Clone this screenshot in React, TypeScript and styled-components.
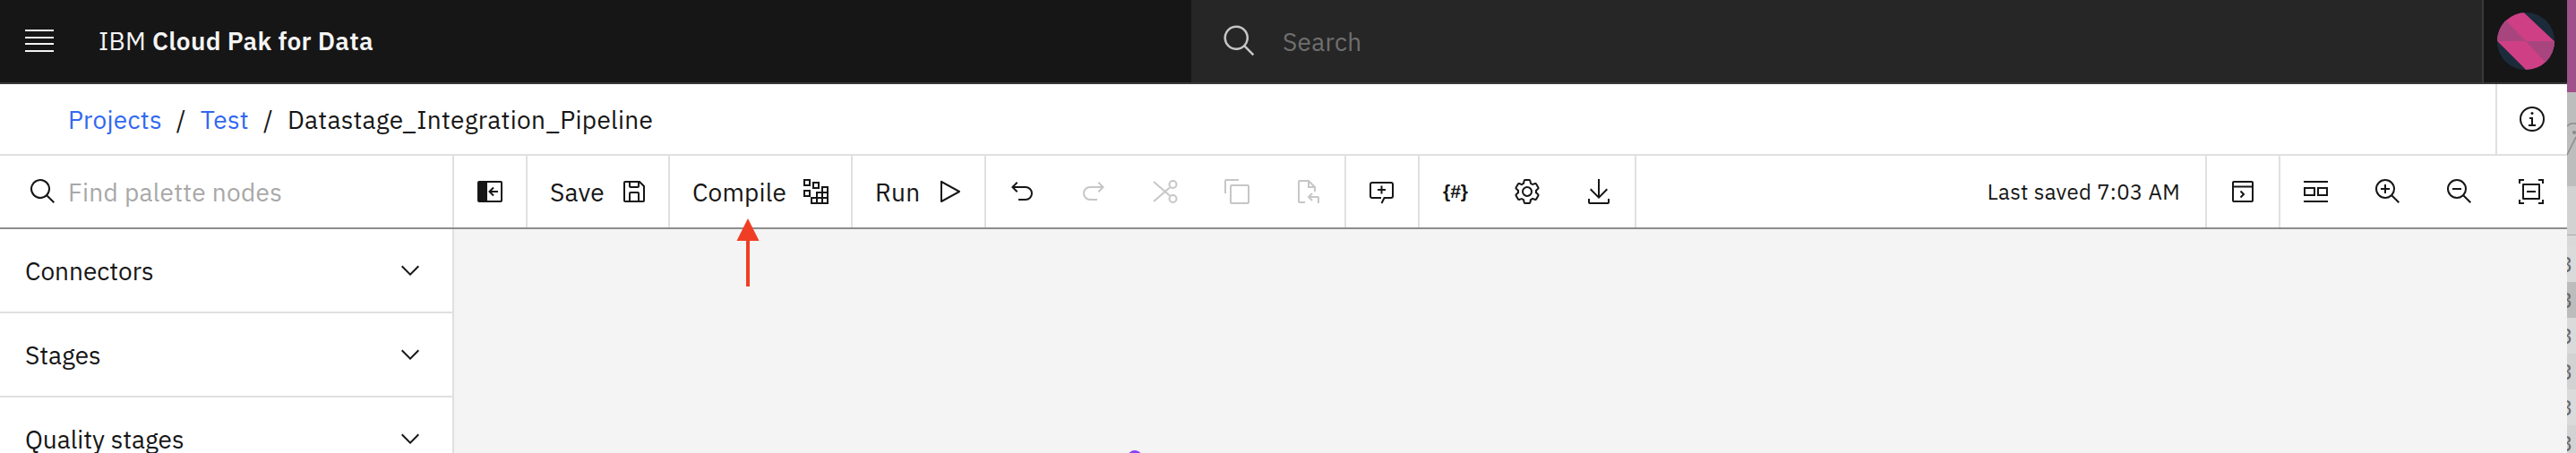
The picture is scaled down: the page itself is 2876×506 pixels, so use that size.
import React from "react";
import styled, { createGlobalStyle } from "styled-components";

const font = `"IBM Plex Sans", Roboto, "Liberation Sans", sans-serif`;

const GlobalStyle = createGlobalStyle`
    html, body {
        margin: 0;
        padding: 0;
        background: #ffffff;
        font-family: ${font};
        overflow: hidden;
    }
`;

interface IconProps {
    faded?: boolean
    children: React.ReactNode
}

const Icon = (props: IconProps) => (
    <IconSvg viewBox="0 0 32 32" $faded={props.faded}>{props.children}</IconSvg>
);

const MAGNIFIER = "M21.4479,20A10.856,10.856,0,0,0,24,13,11,11,0,1,0,13,24a10.856,10.856,0,0,0,7-2.5521L27.5859,29,29,27.5859ZM13,22a9,9,0,1,1,9-9A9.01,9.01,0,0,1,13,22Z";
const SEARCH = "M29,27.5859l-7.5521-7.5521a11.0177,11.0177,0,1,0-1.4141,1.4141L27.5859,29ZM4,13a9,9,0,1,1,9,9A9.01,9.01,0,0,1,4,13Z";

const App = () => {
    return (
        <>
        <GlobalStyle />
        <Page>
            <Main>
                <Header>
                    <MenuButton>
                        <MenuBar /><MenuBar /><MenuBar /><MenuBar />
                    </MenuButton>
                    <Brand>IBM <b>Cloud Pak for Data</b></Brand>
                    <HeaderSearch>
                        <HeaderSearchIcon viewBox="0 0 32 32">
                            <path d={SEARCH} />
                        </HeaderSearchIcon>
                        <HeaderSearchText>Search</HeaderSearchText>
                    </HeaderSearch>
                    <AvatarCell>
                        <svg width="64" height="64" viewBox="0 0 64 64">
                            <defs>
                                <clipPath id="avatar"><circle cx="32" cy="32" r="32" /></clipPath>
                            </defs>
                            <g clipPath="url(#avatar)">
                                <rect width="64" height="64" fill="#1c2b3a" />
                                <polygon points="30,0 64,32 0,32 0,0" fill="#cf3f85" />
                                <polygon points="0,32 64,32 64,64 32,64" fill="#cf3f85" />
                                <polygon points="0,32 32,32 10,9 0,14" fill="#a8457f" />
                                <polygon points="32,32 64,32 64,50 54,56" fill="#a8457f" />
                                <polygon points="0,32 32,64 0,64" fill="#1c2b3a" />
                                <polygon points="30,0 64,0 64,32" fill="#1c2b3a" />
                            </g>
                        </svg>
                    </AvatarCell>
                </Header>

                <Breadcrumbs>
                    <Crumb href="#">Projects</Crumb>
                    <Slash>/</Slash>
                    <Crumb href="#">Test</Crumb>
                    <Slash>/</Slash>
                    <span>Datastage_Integration_Pipeline</span>
                    <InfoCell>
                        <Icon>
                            <path d="M17 22v-8h-4v2h2v6h-3v2h8v-2h-3z" />
                            <path d="M16 8a1.5 1.5 0 1 0 1.5 1.5A1.5 1.5 0 0 0 16 8z" />
                            <path d="M16 30a14 14 0 1 1 14-14 14 14 0 0 1-14 14zm0-26a12 12 0 1 0 12 12A12 12 0 0 0 16 4z" />
                        </Icon>
                    </InfoCell>
                </Breadcrumbs>

                <ToolRow>
                    <PaletteSearch>
                        <PaletteSearchIcon viewBox="0 0 32 32">
                            <path d={SEARCH} />
                        </PaletteSearchIcon>
                        <PalettePlaceholder>Find palette nodes</PalettePlaceholder>
                    </PaletteSearch>
                    <Toolbar>
                        <Section>
                            <IconButton>
                                <Icon>
                                    <path fillRule="evenodd" d="M28 4H4a2 2 0 0 0-2 2v20a2 2 0 0 0 2 2h24a2 2 0 0 0 2-2V6a2 2 0 0 0-2-2zM28 26H13V6H28z" />
                                    <Line d="M20 11.5 15.5 16 20 20.5M16 16H25" />
                                </Icon>
                            </IconButton>
                        </Section>
                        <Section>
                            <TextButton $width={157}>
                                Save
                                <Icon>
                                    <path d="M27.71,9.29l-5-5A1,1,0,0,0,22,4H6A2,2,0,0,0,4,6V26a2,2,0,0,0,2,2H26a2,2,0,0,0,2-2V10A1,1,0,0,0,27.71,9.29ZM12,6h8v4H12Zm8,20H12V18h8Zm2,0V18a2,2,0,0,0-2-2H12a2,2,0,0,0-2,2v8H6V6h4v4a2,2,0,0,0,2,2h8a2,2,0,0,0,2-2V6.41l4,4V26Z" />
                                </Icon>
                            </TextButton>
                        </Section>
                        <Section>
                            <TextButton $width={202}>
                                Compile
                                <Icon>
                                    <Cell x="3" y="3" width="6" height="6" />
                                    <Cell x="13" y="6" width="6" height="6" />
                                    <Cell x="3" y="15" width="6" height="6" />
                                    <Cell x="23" y="11" width="6" height="6" />
                                    <Cell x="17" y="17" width="6" height="6" />
                                    <Cell x="23" y="17" width="6" height="6" />
                                    <Cell x="11" y="23" width="6" height="6" />
                                    <Cell x="17" y="23" width="6" height="6" />
                                    <Cell x="23" y="23" width="6" height="6" />
                                </Icon>
                            </TextButton>
                        </Section>
                        <Section>
                            <TextButton $width={147}>
                                Run
                                <Icon>
                                    <path d="M7,28a1,1,0,0,1-1-1V5a1,1,0,0,1,1.4819-.8763l20,11a1,1,0,0,1,0,1.7525l-20,11A1.0005,1.0005,0,0,1,7,28ZM8,6.6909V25.3088L24.9248,16Z" />
                                </Icon>
                            </TextButton>
                        </Section>
                        <Section>
                            <IconButton>
                                <Icon>
                                    <path d="M20,10H7.8149l3.5874-3.5859L10,5,4,11,10,17l1.4023-1.4146L7.8179,12H20a6,6,0,0,1,0,12H12v2h8a8,8,0,0,0,0-16Z" />
                                </Icon>
                            </IconButton>
                            <IconButton>
                                <Icon faded>
                                    <path d="M12,10H24.1851L20.5977,6.4141,22,5,28,11,22,17l-1.4023-1.4146L24.1821,12H12a6,6,0,0,0,0,12h8v2H12a8,8,0,0,1,0-16Z" />
                                </Icon>
                            </IconButton>
                            <IconButton>
                                <Icon faded>
                                    <Line d="M3 5 21 20.5M3 27 21 11.5" $color="#c6c6c6" />
                                    <Ring cx="24.5" cy="8" r="4" $color="#c6c6c6" />
                                    <Ring cx="24.5" cy="24" r="4" $color="#c6c6c6" />
                                </Icon>
                            </IconButton>
                            <IconButton>
                                <Icon faded>
                                    <path d="M28,10V28H10V10H28m0-2H10a2,2,0,0,0-2,2V28a2,2,0,0,0,2,2H28a2,2,0,0,0,2-2V10a2,2,0,0,0-2-2Z" />
                                    <path d="M4,18H2V4A2,2,0,0,1,4,2H18V4H4Z" />
                                </Icon>
                            </IconButton>
                            <IconButton>
                                <Icon faded>
                                    <Line d="M12 28H6a1 1 0 0 1-1-1V5a1 1 0 0 1 1-1H16L23 11V16M16 4V11H23" $color="#c6c6c6" />
                                    <Line d="M20 18 16 22 20 26M16 22H26a1 1 0 0 1 1 1V29" $color="#c6c6c6" />
                                </Icon>
                            </IconButton>
                        </Section>
                        <Section>
                            <IconButton>
                                <Icon>
                                    <Line d="M15.5 29 18.5 23H26a2 2 0 0 0 2-2V8a2 2 0 0 0-2-2H5A2 2 0 0 0 3 8V21a2 2 0 0 0 2 2H15" />
                                    <Line d="M15.5 9.5V18.5M11 14H20" />
                                </Icon>
                            </IconButton>
                        </Section>
                        <Section>
                            <IconButton>
                                <CodeGlyph>{"{#}"}</CodeGlyph>
                            </IconButton>
                            <IconButton>
                                <Icon>
                                    <path d="M27,16.76c0-.25,0-.5,0-.76s0-.51,0-.77l1.92-1.68A2,2,0,0,0,29.3,11L26.94,7a2,2,0,0,0-1.73-1,2,2,0,0,0-.64.1l-2.43.82a11.35,11.35,0,0,0-1.31-.75l-.51-2.52a2,2,0,0,0-2-1.61H13.64a2,2,0,0,0-2,1.61l-.51,2.52a11.48,11.48,0,0,0-1.32.75L7.43,6.06A2,2,0,0,0,6.79,6,2,2,0,0,0,5.06,7L2.7,11a2,2,0,0,0,.41,2.51L5,15.24c0,.25,0,.5,0,.76s0,.51,0,.77L3.11,18.45A2,2,0,0,0,2.7,21L5.06,25a2,2,0,0,0,1.73,1,2,2,0,0,0,.64-.1l2.43-.82a11.35,11.35,0,0,0,1.31.75l.51,2.52a2,2,0,0,0,2,1.61h4.72a2,2,0,0,0,2-1.61l.51-2.52a11.48,11.48,0,0,0,1.32-.75l2.42.82a2,2,0,0,0,.64.1,2,2,0,0,0,1.73-1L29.3,21a2,2,0,0,0-.41-2.51ZM25.21,24l-3.43-1.16a8.86,8.86,0,0,1-2.71,1.57L18.36,28H13.64l-.71-3.55a9.36,9.36,0,0,1-2.7-1.57L6.79,24,4.43,20l2.72-2.4a8.9,8.9,0,0,1,0-3.13L4.43,12,6.79,8l3.43,1.16a8.86,8.86,0,0,1,2.71-1.57L13.64,4h4.72l.71,3.55a9.36,9.36,0,0,1,2.7,1.57L25.21,8,27.57,12l-2.72,2.4a8.9,8.9,0,0,1,0,3.13L27.57,20Z" />
                                    <path d="M16,22a6,6,0,1,1,6-6A5.94,5.94,0,0,1,16,22Zm0-10a3.91,3.91,0,0,0-4,4,3.91,3.91,0,0,0,4,4,3.91,3.91,0,0,0,4-4A3.91,3.91,0,0,0,16,12Z" />
                                </Icon>
                            </IconButton>
                            <IconButton>
                                <Icon>
                                    <path d="M26,24v4H6V24H4v4H4a2,2,0,0,0,2,2H26a2,2,0,0,0,2-2h0V24Z" />
                                    <path d="M26 14L24.59 12.59 17 20.17 17 2 15 2 15 20.17 7.41 12.59 6 14 16 24 26 14z" />
                                </Icon>
                            </IconButton>
                        </Section>
                        <LastSaved>Last saved 7:03 AM</LastSaved>
                        <Section $leading>
                            <IconButton>
                                <Icon>
                                    <Line d="M6 5H26a1 1 0 0 1 1 1V26a1 1 0 0 1-1 1H6a1 1 0 0 1-1-1V6a1 1 0 0 1 1-1ZM5 10.500H27" />
                                    <Line d="M13.500 15.500 17 19 13.500 22.500" />
                                </Icon>
                            </IconButton>
                        </Section>
                        <Section $leading>
                            <IconButton>
                                <Icon>
                                    <path d="M2 4h27v2H2zM2 26h27v2H2z" />
                                    <Cell x="3" y="12" width="11" height="8" />
                                    <Cell x="18" y="12" width="10" height="8" />
                                </Icon>
                            </IconButton>
                            <IconButton>
                                <Icon>
                                    <path d="M18 12L14 12 14 8 12 8 12 12 8 12 8 14 12 14 12 18 14 18 14 14 18 14 18 12z" />
                                    <path d={MAGNIFIER} />
                                </Icon>
                            </IconButton>
                            <IconButton>
                                <Icon>
                                    <path d="M8 12H18V14H8z" />
                                    <path d={MAGNIFIER} />
                                </Icon>
                            </IconButton>
                            <IconButton>
                                <Icon>
                                    <path d="M8 2H2v5h2V4h4zM24 2h6v5h-2V4h-4zM8 30H2v-5h2v3h4zM24 30h6v-5h-2v3h-4z" />
                                    <path fillRule="evenodd" d="M25 7H7a1 1 0 0 0-1 1v16a1 1 0 0 0 1 1h18a1 1 0 0 0 1-1V8a1 1 0 0 0-1-1zm-1 16H8V9h16z" />
                                    <path d="M11 15h10v2H11z" />
                                </Icon>
                            </IconButton>
                        </Section>
                    </Toolbar>
                </ToolRow>

                <Body>
                    <Sidebar>
                        {["Connectors", "Stages", "Quality stages"].map(name => (
                            <AccordionRow key={name}>
                                {name}
                                <ChevronIcon viewBox="0 0 32 32">
                                    <path d="M16 22L6 12 7.4 10.6 16 19.2 24.6 10.6 26 12 16 22z" />
                                </ChevronIcon>
                            </AccordionRow>
                        ))}
                    </Sidebar>
                    <Canvas>
                        <NodeDot />
                    </Canvas>
                </Body>

                <ArrowOverlay viewBox="0 0 26 76">
                    <polygon points="13,0 25.500,25 0.500,25" fill="#f03e24" />
                    <rect x="11" y="24" width="4" height="52" fill="#f03e24" />
                </ArrowOverlay>
            </Main>
            <EdgeStrip>
                <EdgePurple />
                <EdgeWindow>
                    <svg width="10" height="105" viewBox="0 0 10 105">
                        <path d="M0 38 4 35H10M0 70 10 50" fill="none" stroke="#8a8a8a" strokeWidth="1.500" />
                        <circle cx="8" cy="45" r="2" fill="#8a8a8a" />
                    </svg>
                </EdgeWindow>
                <EdgeGap />
                {[0, 1, 2, 3, 4, 5].map(i => (
                    <EdgeRow key={i} $shade={i === 1 ? "#bcbcbc" : i % 2 === 0 ? "#dadada" : "#d2d2d2"}>3</EdgeRow>
                ))}
            </EdgeStrip>
        </Page>
        </>
    )
}

const Page = styled.div`
    display: flex;
    width: 2876px;
    height: 506px;
    overflow: hidden;
`

const Main = styled.div`
    display: flex;
    flex-direction: column;
    width: 2866px;
    height: 506px;
    position: relative;
    color: #161616;
`

const Header = styled.header`
    display: flex;
    align-items: stretch;
    height: 94px;
    box-sizing: border-box;
    background: #161616;
    border-bottom: 2px solid #393939;
`

const MenuButton = styled.div`
    display: flex;
    flex-direction: column;
    justify-content: space-between;
    width: 32px;
    height: 25px;
    margin: 33px 0 0 28px;
`

const MenuBar = styled.div`
    height: 2px;
    background: #f4f4f4;
`

const Brand = styled.div`
    margin-left: 50px;
    width: 1220px;
    line-height: 92px;
    font-size: 28px;
    font-weight: 400;
    letter-spacing: 0.3px;
    color: #f4f4f4;

    b {
        font-weight: 600;
    }
`

const HeaderSearch = styled.div`
    display: flex;
    align-items: center;
    flex: 1;
    background: #262626;
    padding-left: 34px;
`

const HeaderSearchIcon = styled.svg`
    width: 40px;
    height: 40px;
    fill: #c6c6c6;
`

const HeaderSearchText = styled.span`
    margin-left: 28px;
    font-size: 28px;
    letter-spacing: 0.3px;
    color: #6f6f6f;
`

const AvatarCell = styled.div`
    display: flex;
    align-items: center;
    justify-content: center;
    box-sizing: border-box;
    width: 95px;
    border-left: 2px solid #393939;
`

const Breadcrumbs = styled.nav`
    display: flex;
    align-items: center;
    height: 80px;
    box-sizing: border-box;
    padding-left: 76px;
    font-size: 28px;
    letter-spacing: 0.3px;
    color: #161616;
    background: #ffffff;
    border-bottom: 2px solid #e0e0e0;
`

const Crumb = styled.a`
    color: #3168f0;
    text-decoration: none;
`

const Slash = styled.span`
    margin: 0 16px;
`

const InfoCell = styled.div`
    display: flex;
    align-items: center;
    justify-content: center;
    margin-left: auto;
    box-sizing: border-box;
    width: 80px;
    height: 78px;
    border-left: 2px solid #e0e0e0;
`

const ToolRow = styled.div`
    display: flex;
    height: 82px;
    box-sizing: border-box;
    background: #ffffff;
    border-bottom: 2px solid #8d8d8d;
`

const PaletteSearch = styled.div`
    display: flex;
    align-items: center;
    box-sizing: border-box;
    width: 507px;
    padding-left: 32px;
    border-right: 2px solid #e0e0e0;
`

const PaletteSearchIcon = styled.svg`
    width: 32px;
    height: 32px;
    fill: #161616;
`

const PalettePlaceholder = styled.span`
    margin-left: 12px;
    font-size: 28px;
    letter-spacing: 0.3px;
    color: #a8a8a8;
`

const Toolbar = styled.div`
    display: flex;
    flex: 1;
    align-items: stretch;
`

const Section = styled.div<{ $leading?: boolean }>`
    display: flex;
    align-items: center;
    ${props => props.$leading ? "border-left: 2px solid #e0e0e0;" : "border-right: 2px solid #e0e0e0;"}
`

const IconButton = styled.div`
    display: flex;
    align-items: center;
    justify-content: center;
    width: 80px;
    height: 100%;
`

const TextButton = styled.div<{ $width: number }>`
    display: flex;
    align-items: center;
    gap: 17px;
    box-sizing: border-box;
    width: ${props => props.$width}px;
    height: 100%;
    padding-left: 25px;
    font-size: 28px;
    letter-spacing: 0.2px;
`

const IconSvg = styled.svg<{ $faded?: boolean }>`
    width: 32px;
    height: 32px;
    fill: ${props => props.$faded ? "#c6c6c6" : "#161616"};
`

const Line = styled.path<{ $color?: string }>`
    fill: none;
    stroke: ${props => props.$color || "#161616"};
    stroke-width: 2;
`

const Ring = styled.circle<{ $color?: string }>`
    fill: none;
    stroke: ${props => props.$color || "#161616"};
    stroke-width: 2;
`

const Cell = styled.rect`
    fill: none;
    stroke: #161616;
    stroke-width: 2;
`

const CodeGlyph = styled.span`
    font-family: "Liberation Sans", sans-serif;
    font-size: 21px;
    font-weight: 700;
`

const LastSaved = styled.div`
    margin-left: auto;
    align-self: center;
    margin-right: 28px;
    font-size: 24px;
    letter-spacing: 0.3px;
`

const Body = styled.div`
    display: flex;
    flex: 1;
    min-height: 0;
`

const Sidebar = styled.aside`
    box-sizing: border-box;
    width: 507px;
    background: #ffffff;
    border-right: 2px solid #e0e0e0;
`

const AccordionRow = styled.div`
    display: flex;
    align-items: center;
    justify-content: space-between;
    box-sizing: border-box;
    height: 94px;
    padding: 0 31px 0 28px;
    font-size: 28px;
    border-bottom: 2px solid #e0e0e0;
`

const ChevronIcon = styled.svg`
    width: 32px;
    height: 32px;
    fill: #161616;
`

const Canvas = styled.div`
    flex: 1;
    position: relative;
    overflow: hidden;
    background: #f4f4f4;
`

const NodeDot = styled.div`
    position: absolute;
    left: 752px;
    top: 247px;
    width: 16px;
    height: 16px;
    border-radius: 50%;
    background: #8a3ffc;
`

const ArrowOverlay = styled.svg`
    position: absolute;
    left: 822px;
    top: 244px;
    width: 26px;
    height: 76px;
`

const EdgeStrip = styled.div`
    width: 10px;
    height: 506px;
    overflow: hidden;
    background: #d2d2d2;
`

const EdgePurple = styled.div`
    height: 103px;
    background: #a0508a;
`

const EdgeWindow = styled.div`
    height: 105px;
    background: #bdbdbd;

    svg {
        display: block;
    }
`

const EdgeGap = styled.div`
    height: 67px;
    background: linear-gradient(#d2d2d2 54px, #a8a8a8 54px, #a8a8a8 55px, #d8d8d8 55px);
`

const EdgeRow = styled.div<{ $shade: string }>`
    height: 40px;
    overflow: hidden;
    font-size: 24px;
    line-height: 40px;
    text-indent: -8px;
    color: #666666;
    background: ${props => props.$shade};
`

export default App
